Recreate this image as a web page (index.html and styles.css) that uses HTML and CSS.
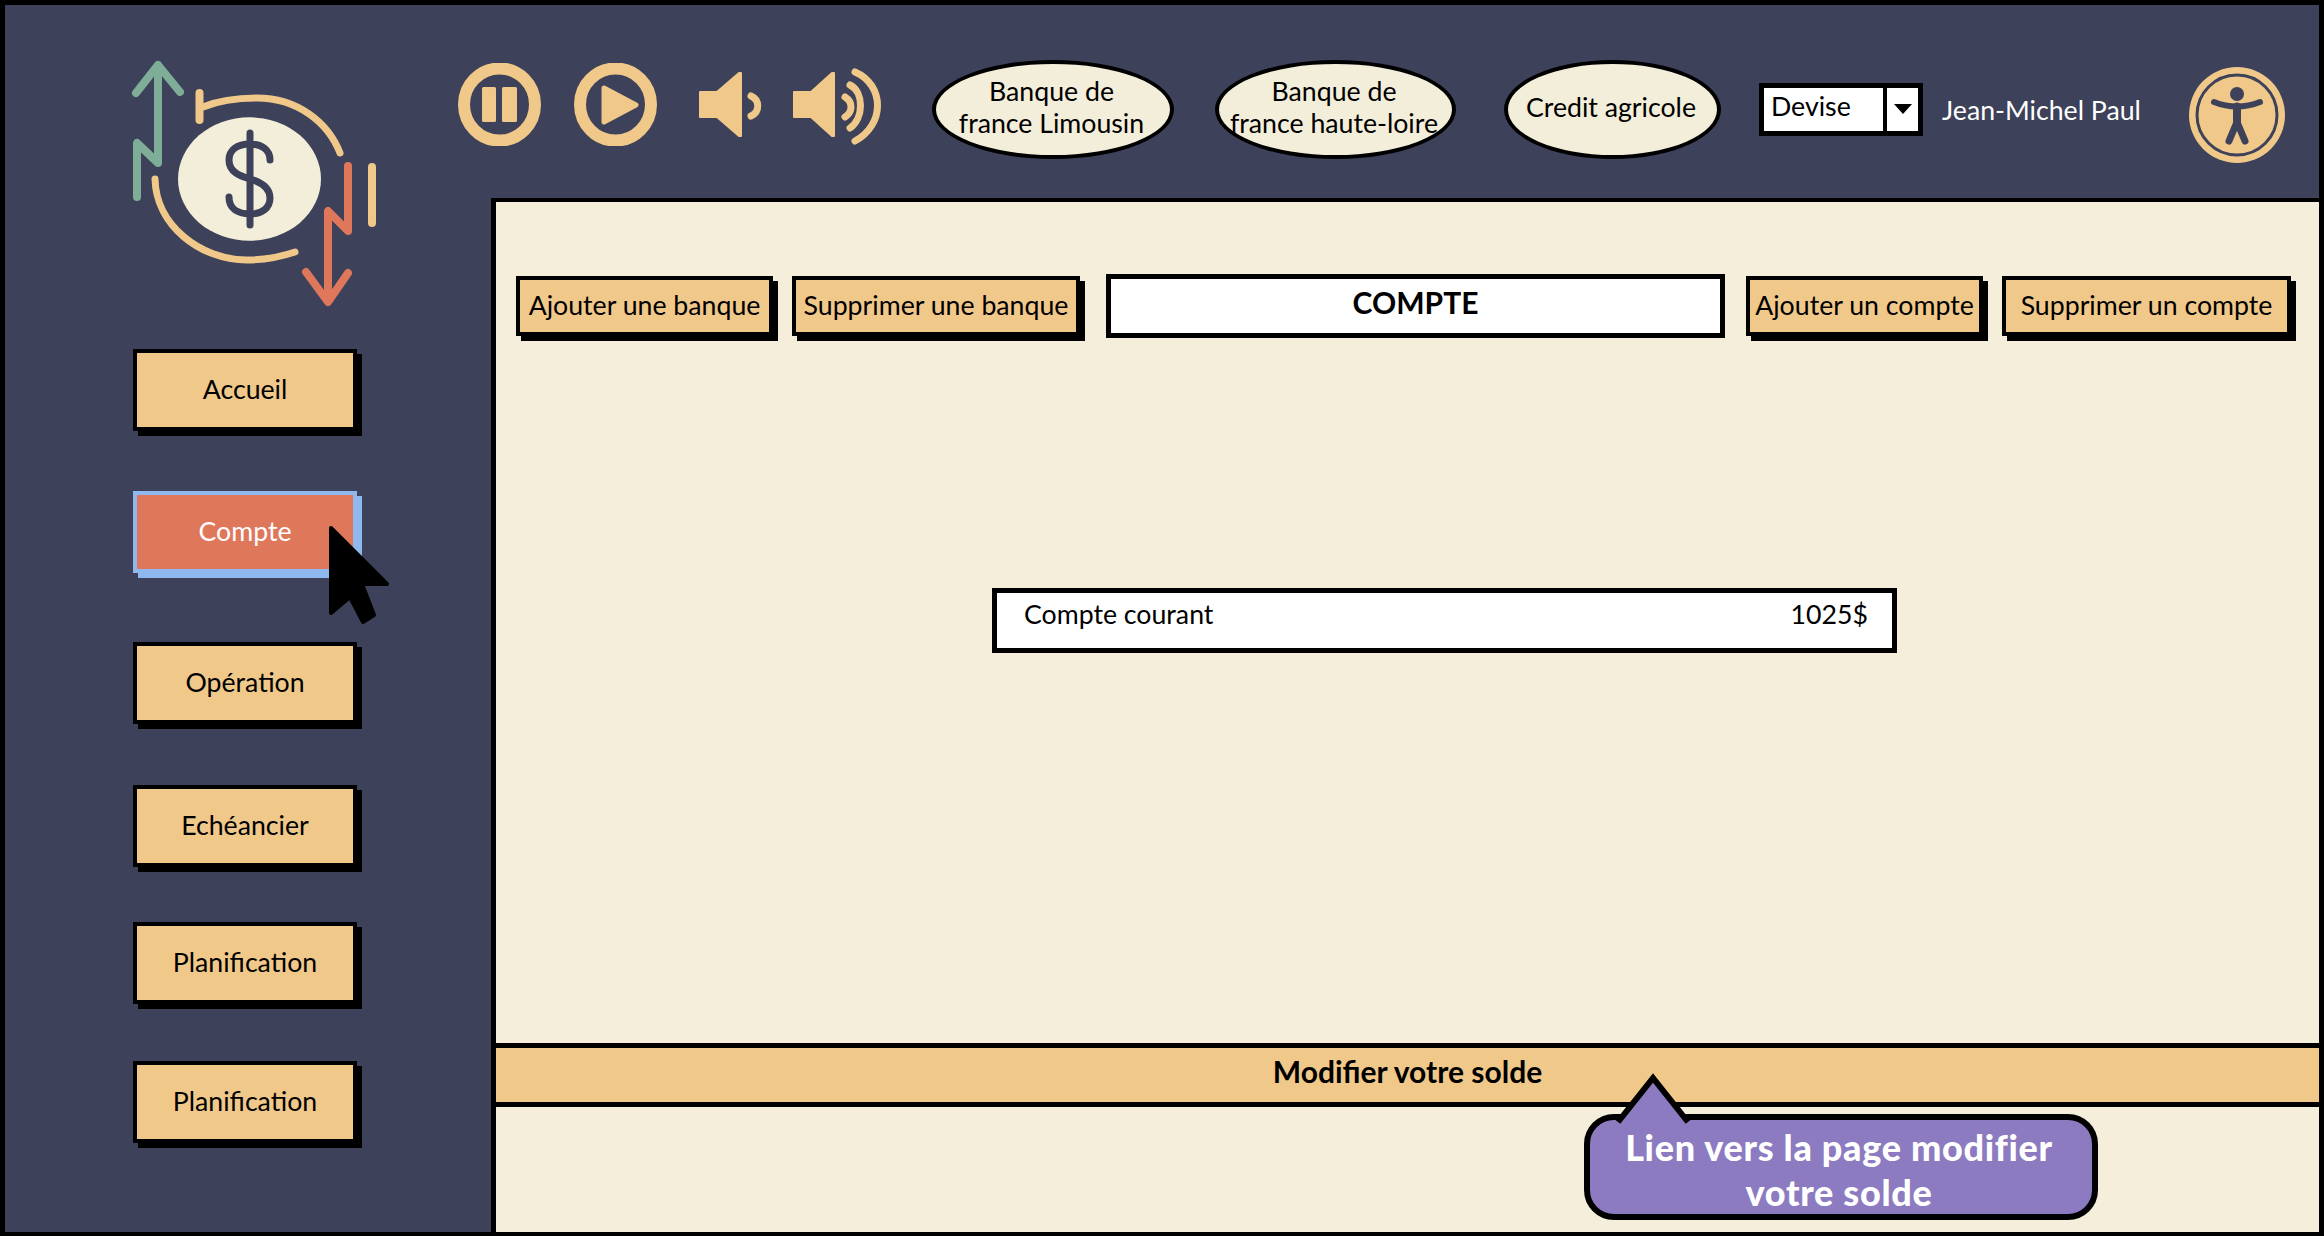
FILE: index.html
```html
<!DOCTYPE html>
<html lang="en">
<head>
  <meta charset="UTF-8">
  <title>Compte</title>
  <link rel="stylesheet" href="styles.css">
</head>
<body>
  <div class="frame">
    <aside class="sidebar">
      <!-- logo: coin with up and down arrows -->
      <svg class="logo" viewBox="120 50 270 270" fill="none" stroke-linecap="round" stroke-linejoin="round">
        <path d="M136 93L158 65L180 92M158 65V163L137 143V197" stroke="#7fae98" stroke-width="8"/>
        <path d="M199.5 93V120" stroke="#f0c88a" stroke-width="8"/>
        <path d="M203 107C220 100 240 98 257 98C297 98 328 122 340 153" stroke="#f0c88a" stroke-width="7"/>
        <path d="M155 179C156 225 200 260 247 260C265 260 280 257 295 252" stroke="#f0c88a" stroke-width="7"/>
        <path d="M372 167V223" stroke="#f0c88a" stroke-width="8"/>
        <ellipse cx="249.5" cy="179" rx="71.5" ry="61.7" fill="#f3eeda"/>
        <path d="M250 133V225M270 160C270 150 262 144 250 144C237 144 229 150 229 160C229 172 240 176 250 179C260 182 270 187 270 198C270 208 262 214 250 214C237 214 229 208 229 197" stroke="#3d4159" stroke-width="7"/>
        <path d="M348 166V231L328 211V300M306 272L328 302L348 273" stroke="#df775b" stroke-width="8"/>
      </svg>

      <nav class="side-nav">
        <a class="side-btn">Accueil</a>
        <a class="side-btn side-btn-active">Compte</a>
        <a class="side-btn">Opération</a>
        <a class="side-btn">Echéancier</a>
        <a class="side-btn">Planification</a>
        <a class="side-btn">Planification</a>
      </nav>

      <svg class="cursor" viewBox="325 522 68 106">
        <path d="M331 528L387 584H362L374 615L363 622L350 597L331 613Z" fill="#000" stroke="#000" stroke-width="4" stroke-linejoin="round"/>
      </svg>
    </aside>

    <div class="content">
      <header class="topbar">
        <svg class="media media-pause" viewBox="458 63 83 83">
          <ellipse cx="499.5" cy="104.5" rx="35.5" ry="36" fill="none" stroke="#f0c88a" stroke-width="12"/>
          <rect x="482" y="87" width="14" height="35" rx="1.5" fill="#f0c88a"/>
          <rect x="502" y="87" width="15" height="35" rx="1.5" fill="#f0c88a"/>
        </svg>
        <svg class="media media-play" viewBox="574 63 83 83">
          <ellipse cx="615.5" cy="104.5" rx="35.5" ry="36" fill="none" stroke="#f0c88a" stroke-width="12"/>
          <path d="M604 88L636 105L604 122Z" fill="#f0c88a" stroke="#f0c88a" stroke-width="5" stroke-linejoin="round"/>
        </svg>
        <svg class="media media-low" viewBox="699 63 63 83">
          <path d="M700 92H717L739 73H741V136H739L717 117H700Z" fill="#f0c88a" stroke="#f0c88a" stroke-width="2" stroke-linejoin="round"/>
          <path d="M751 96C760 100 760 112 751 116" fill="none" stroke="#f0c88a" stroke-width="7" stroke-linecap="round"/>
        </svg>
        <svg class="media media-high" viewBox="793 63 90 83">
          <path d="M794 92H811L832 73H834V136H832L811 117H794Z" fill="#f0c88a" stroke="#f0c88a" stroke-width="2" stroke-linejoin="round"/>
          <path d="M845 97C853 102 853 112 845 117M850 85C864 92 864 118 850 128M855 72C885 85 885 125 855 141" fill="none" stroke="#f0c88a" stroke-width="7" stroke-linecap="round"/>
        </svg>

        <div class="bank bank-limousin">Banque de<br>france Limousin</div>
        <div class="bank bank-loire">Banque de<br>france haute-loire</div>
        <div class="bank bank-credit">Credit agricole</div>

        <div class="select">
          <span class="select-value">Devise</span>
          <span class="select-arrow"></span>
        </div>
        <span class="user-name">Jean-Michel Paul</span>

        <svg class="a11y" viewBox="2188 67 96 96" fill="none" stroke-linecap="round" stroke-linejoin="round">
          <ellipse cx="2236" cy="115" rx="48" ry="48" fill="#f0c88a"/>
          <ellipse cx="2236" cy="115" rx="40" ry="40" stroke="#3d4159" stroke-width="3"/>
          <circle cx="2236" cy="94" r="7" fill="#3d4159"/>
          <path d="M2213 102C2228 108 2244 108 2259 102" stroke="#3d4159" stroke-width="6"/>
          <path d="M2236 106V122L2228 141M2236 122L2244 141" stroke="#3d4159" stroke-width="7"/>
          <path d="M2232 106H2240V124H2232Z" fill="#3d4159"/>
        </svg>
      </header>

      <main class="panel">
        <div class="toolbar">
          <button class="tool-btn tool-add-bank">Ajouter une banque</button>
          <button class="tool-btn tool-del-bank">Supprimer une banque</button>
          <div class="page-title">COMPTE</div>
          <button class="tool-btn tool-add-account">Ajouter un compte</button>
          <button class="tool-btn tool-del-account">Supprimer un compte</button>
        </div>

        <div class="account">
          <span>Compte courant</span>
          <span>1025$</span>
        </div>

        <div class="edit-bar">Modifier votre solde</div>

        <div class="tooltip">
          <svg class="tooltip-tail" viewBox="1610 1070 90 56">
            <path d="M1618 1126L1653 1078L1688 1126Z" fill="#8c7bc0"/>
            <path d="M1618 1122L1653 1078L1688 1122" fill="none" stroke="#000" stroke-width="6"/>
          </svg>
          Lien vers la page modifier<br>votre solde
        </div>
      </main>
    </div>
  </div>
</body>
</html>
```

FILE: styles.css
```css
* {
  box-sizing: border-box;
}

body {
  margin: 0;
  font-family: Lato, "Liberation Sans", sans-serif;
  font-size: 26.7px;
  color: #000;
}

.frame {
  position: relative;
  display: flex;
  width: 2324px;
  height: 1236px;
  background: #3d4159;
  border: 5px solid #000;
  border-bottom-width: 4px;
  overflow: hidden;
}

/* left column */
.sidebar {
  position: relative;
  width: 440px;
  padding: 45px 0 0 115px;
}

.logo {
  display: block;
  width: 270px;
  height: 270px;
}

.side-nav {
  display: flex;
  flex-direction: column;
  margin: 29px 0 0 13px;
}

.side-btn {
  display: flex;
  align-items: center;
  justify-content: center;
  width: 224px;
  height: 82px;
  padding-bottom: 3px;
  background: #f0c88a;
  border: 4px solid #000;
  box-shadow: 5px 5px 0 #000;
}

.side-btn:nth-child(1) { margin-bottom: 60px; }
.side-btn:nth-child(2) { margin-bottom: 69px; }
.side-btn:nth-child(3) { margin-bottom: 61px; }
.side-btn:nth-child(4) { margin-bottom: 55px; }
.side-btn:nth-child(5) { margin-bottom: 57px; }

.side-btn-active {
  color: #fff;
  background: #df775b;
  border-color: #8fb8ee;
  box-shadow: 5px 5px 0 #8fb8ee;
}

.cursor {
  position: absolute;
  left: 320px;
  top: 517px;
  width: 68px;
  height: 106px;
}

/* right column */
.content {
  display: flex;
  flex-direction: column;
  flex: 1;
}

.topbar {
  display: flex;
  align-items: flex-start;
  height: 193px;
  padding: 55px 0 0 13px;
}

.media {
  height: 83px;
  margin-top: 3px;
}

.media-pause { width: 83px; }
.media-play { width: 83px; margin-left: 33px; }
.media-low { width: 63px; margin-left: 42px; }
.media-high { width: 90px; margin-left: 31px; }

.bank {
  display: flex;
  align-items: center;
  justify-content: center;
  height: 99px;
  padding: 0 3px 6px 0;
  line-height: 32px;
  text-align: center;
  white-space: nowrap;
  background: #f3eeda;
  border: 4px solid #000;
  border-radius: 50%;
}

.bank-limousin { width: 242px; margin-left: 49px; }
.bank-loire { width: 241px; margin-left: 41px; }
.bank-credit { width: 217px; margin-left: 48px; }

.select {
  display: flex;
  width: 164px;
  height: 53px;
  margin: 23px 0 0 38px;
  background: #fff;
  border: 5px solid #000;
}

.select-value {
  width: 123px;
  padding: 0 0 0 7px;
  line-height: 36px;
  border-right: 4px solid #000;
}

.select-arrow {
  width: 0;
  height: 0;
  margin: 16px 0 0 7px;
  border-left: 9px solid transparent;
  border-right: 9px solid transparent;
  border-top: 10px solid #000;
}

.user-name {
  width: 203px;
  margin: 34px 0 0 19px;
  line-height: 32px;
  white-space: nowrap;
  color: #fff;
}

.a11y {
  width: 96px;
  height: 96px;
  margin: 7px 0 0 44px;
}

.panel {
  position: relative;
  display: flex;
  flex-direction: column;
  flex: 1;
  margin-left: 46px;
  background: #f4eedb;
  border-top: 4px solid #000;
  border-left: 5px solid #000;
}

.toolbar {
  display: flex;
  align-items: center;
  margin-top: 72px;
  padding-left: 20px;
}

.tool-btn {
  height: 60px;
  padding: 0 0 3px;
  font: inherit;
  white-space: nowrap;
  background: #f0c88a;
  border: 4px solid #000;
  box-shadow: 5px 5px 0 #000;
}

.tool-add-bank { width: 257px; }
.tool-del-bank { width: 288px; margin-left: 19px; }
.tool-add-account { width: 237px; margin-left: 21px; }
.tool-del-account { width: 289px; margin-left: 19px; }

.page-title {
  width: 619px;
  height: 64px;
  margin-left: 26px;
  line-height: 47px;
  font-size: 30px;
  font-weight: 700;
  text-align: center;
  background: #fff;
  border: 5px solid #000;
}

.account {
  display: flex;
  justify-content: space-between;
  width: 905px;
  height: 65px;
  margin: 250px 0 0 496px;
  padding: 5px 24px 0 27px;
  background: #fff;
  border: 5px solid #000;
}

.edit-bar {
  height: 64px;
  margin: auto 0 125px -5px;
  line-height: 46px;
  font-weight: 700;
  font-size: 30px;
  text-align: center;
  background: #f0c88a;
  border: 5px solid #000;
  border-right: 0;
}

.tooltip {
  position: absolute;
  left: 1088px;
  top: 912px;
  width: 514px;
  height: 106px;
  padding: 5px 4px 0 0;
  font-size: 36px;
  font-weight: 900;
  letter-spacing: 0.7px;
  line-height: 45px;
  text-align: center;
  color: #fff;
  background: #8c7bc0;
  border: 6px solid #000;
  border-radius: 30px;
}

.tooltip-tail {
  position: absolute;
  left: 20px;
  top: -50px;
  width: 90px;
  height: 56px;
}
```
